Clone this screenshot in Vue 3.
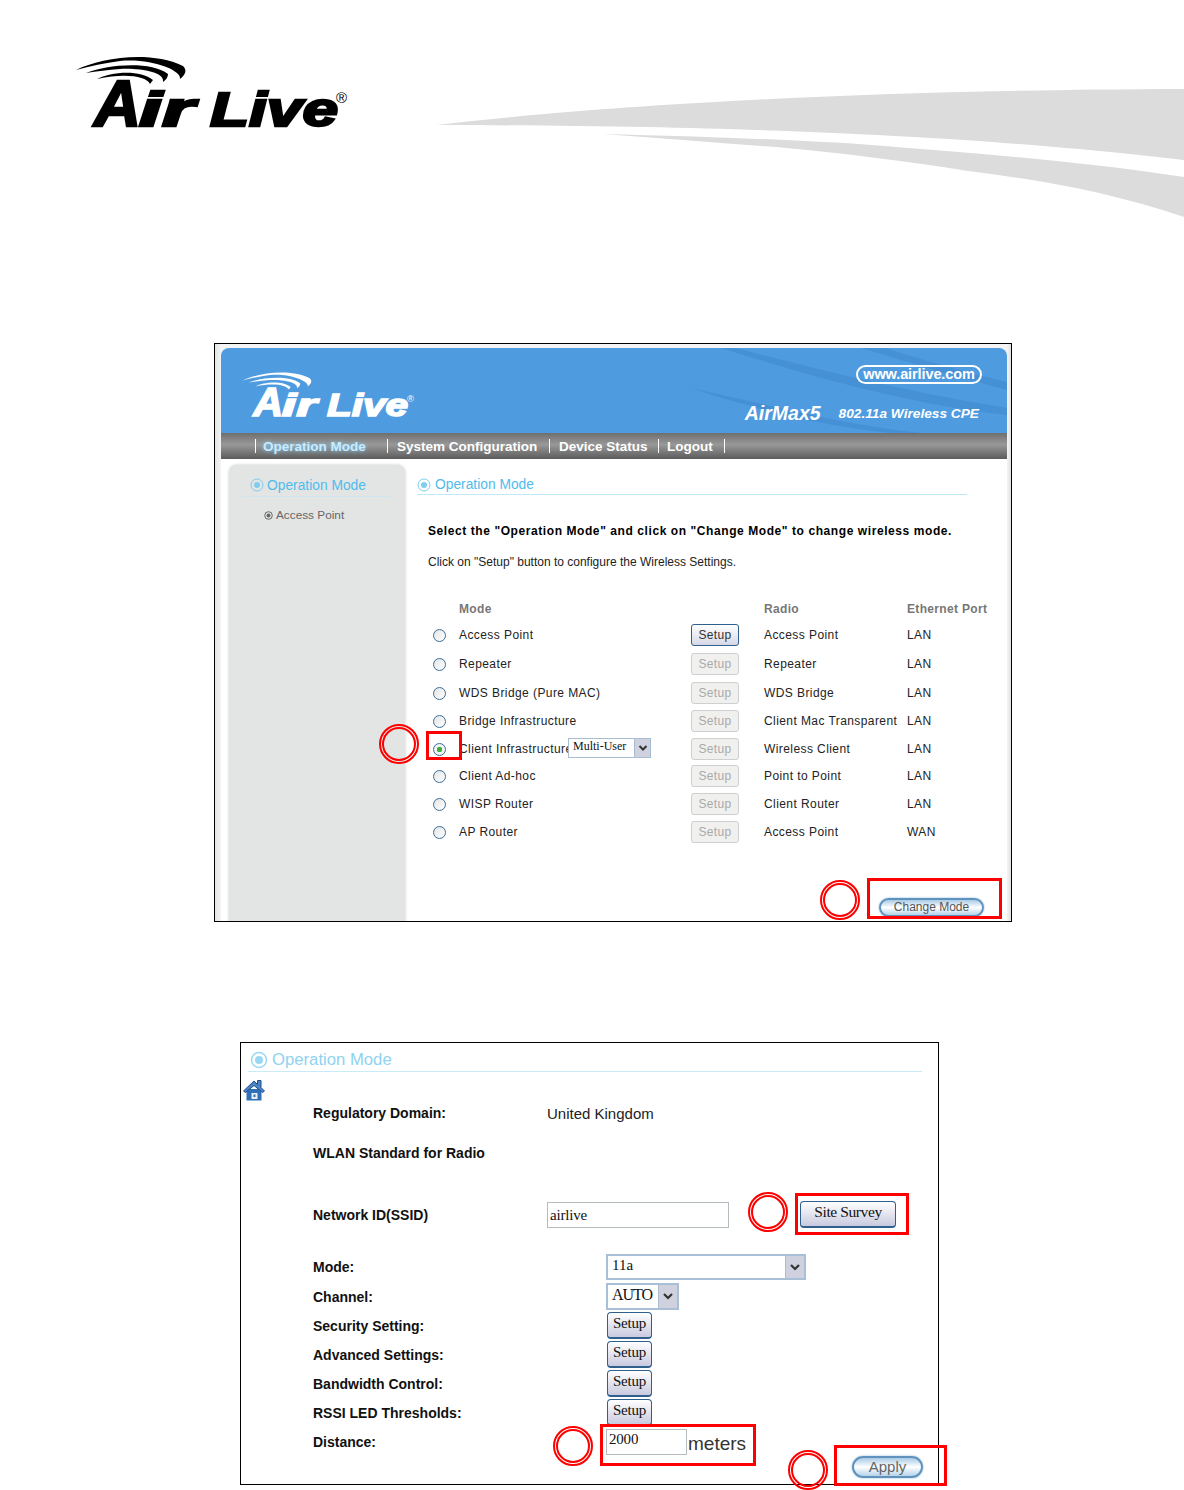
<script setup>
const modes = [
  { name: 'Access Point', radio: 'Access Point', port: 'LAN', step: 29, active: true },
  { name: 'Repeater', radio: 'Repeater', port: 'LAN', step: 29 },
  { name: 'WDS Bridge (Pure MAC)', radio: 'WDS Bridge', port: 'LAN', step: 28 },
  { name: 'Bridge Infrastructure', radio: 'Client Mac Transparent', port: 'LAN', step: 28 },
  { name: 'Client Infrastructure', radio: 'Wireless Client', port: 'LAN', step: 27, selected: true },
  { name: 'Client Ad-hoc', radio: 'Point to Point', port: 'LAN', step: 28 },
  { name: 'WISP Router', radio: 'Client Router', port: 'LAN', step: 28 },
  { name: 'AP Router', radio: 'Access Point', port: 'WAN', step: 28 }
]
const setups = ['Security Setting:', 'Advanced Settings:', 'Bandwidth Control:', 'RSSI LED Thresholds:']
const boxes = [
  { x: 426, y: 731, w: 36, h: 29 },
  { x: 867, y: 878, w: 135, h: 41 },
  { x: 795, y: 1193, w: 114, h: 42 },
  { x: 600, y: 1424, w: 156, h: 42 },
  { x: 834, y: 1445, w: 113, h: 41 }
]
const rings = [
  { x: 399, y: 744 },
  { x: 840, y: 900 },
  { x: 768, y: 1212 },
  { x: 573, y: 1446 },
  { x: 808, y: 1470 }
]
</script>

<template>
  <div class="page">
    <svg class="banner" width="1184" height="343" viewBox="0 0 1184 343">
      <defs>
        <symbol id="airlive-logo" viewBox="70 50 285 85">
          <path fill="currentColor" d="M76 70C100 58 150 50 183 66C187 70 186 74 180 79C182 70 150 58 120 61C105 63 90 66 76 70Z" />
          <path fill="currentColor" d="M86 73C105 65 150 60 168 74C168 77 166 80 163 82C165 72 140 68 120 69C108 70 97 71 86 73Z" />
          <path fill="currentColor" d="M97 79C110 72 140 69 153 80L150 84C146 76 125 73 97 79Z" />
          <g fill="currentColor" stroke="currentColor" stroke-width="2.400" font-family="'Liberation Sans', sans-serif" font-weight="700" font-style="italic">
            <text x="94" y="126" font-size="64" textLength="47" lengthAdjust="spacingAndGlyphs">A</text>
            <text x="139" y="126" font-size="48" textLength="55" lengthAdjust="spacingAndGlyphs">ir</text>
            <text x="210" y="126" font-size="48" textLength="128" lengthAdjust="spacingAndGlyphs">Live</text>
          </g>
          <text x="336" y="103" font-size="15" fill="currentColor" font-family="'Liberation Sans', sans-serif">®</text>
        </symbol>
      </defs>
      <use href="#airlive-logo" x="70" y="50" width="285" height="85" color="#000" />
      <path fill="#dcdcdc" d="M437 125C600 106 850 90 1184 89L1184 160C1000 139 800 126 437 125Z" />
      <path fill="#dcdcdc" d="M603 134C720 137 830 141 896 147C1000 155 1090 163 1184 177L1184 217C1110 192 1040 180 968 171C900 160 840 153 776 147C720 143 660 138 603 134Z" />
    </svg>

    <section class="shot shot-one">
      <header class="hero">
        <svg class="hero-waves" viewBox="0 0 786 85" width="786" height="85" aria-hidden="true">
          <path fill="#4690d6" d="M500 0C580 25 680 55 786 67L786 60C690 45 590 20 515 0Z" />
          <path fill="#4690d6" d="M470 40C560 60 630 78 700 85L670 85C600 78 530 60 470 40Z" />
          <path fill="#4690d6" d="M640 0C690 15 740 30 786 42L786 34C745 24 700 12 665 0Z" />
        </svg>
        <svg class="hero-logo" width="181" height="54" viewBox="0 0 181 54">
          <use href="#airlive-logo" x="0" y="0" width="181" height="54" color="#fff" />
        </svg>
        <div class="hero-side">
          <div class="site-pill">www.airlive.com</div>
          <div class="product">
            <span class="product-name">AirMax5</span>
            <span class="product-type">802.11a Wireless CPE</span>
          </div>
        </div>
      </header>

      <nav class="nav">
        <span class="nav-item nav-current">Operation Mode</span>
        <span class="nav-item nav-system">System Configuration</span>
        <span class="nav-item nav-device">Device Status</span>
        <span class="nav-item nav-logout">Logout</span>
      </nav>

      <div class="workspace">
        <aside class="side">
          <div class="side-title">
            <svg class="target" width="14" height="14" viewBox="0 0 14 14"><circle cx="7" cy="7" r="6" fill="none" stroke="#7fcdf0" /><circle cx="7" cy="7" r="3" fill="#7fcdf0" /></svg>
            <span>Operation Mode</span>
          </div>
          <div class="side-item">
            <svg width="9" height="9" viewBox="0 0 9 9"><circle cx="4.500" cy="4.500" r="3.800" fill="none" stroke="#666" /><circle cx="4.500" cy="4.500" r="2" fill="#666" /></svg>
            <span>Access Point</span>
          </div>
        </aside>

        <main class="content">
          <div class="content-title">
            <svg class="target" width="14" height="14" viewBox="0 0 14 14"><circle cx="7" cy="7" r="6" fill="none" stroke="#7fcdf0" /><circle cx="7" cy="7" r="3" fill="#7fcdf0" /></svg>
            <span>Operation Mode</span>
          </div>
          <p class="lead">Select the "Operation Mode" and click on "Change Mode" to change wireless mode.</p>
          <p class="hint">Click on "Setup" button to configure the Wireless Settings.</p>

          <div class="mode-table">
            <div class="mode-head">
              <span></span><span>Mode</span><span></span><span>Radio</span><span>Ethernet Port</span>
            </div>
            <div v-for="m in modes" :key="m.name" class="mode-row" :style="{ height: m.step + 'px' }">
              <span class="radio" :class="{ checked: m.selected }"></span>
              <span class="mode-name">
                {{ m.name }}
                <span v-if="m.selected" class="mini-select">
                  <span>Multi-User</span>
                  <span class="arrow-box"><svg width="10" height="8" viewBox="0 0 10 8"><path d="M1.500 2L5 5.500L8.500 2" fill="none" stroke="#333" stroke-width="2" /></svg></span>
                </span>
              </span>
              <span><button class="setup-btn" :class="{ enabled: m.active }">Setup</button></span>
              <span>{{ m.radio }}</span>
              <span>{{ m.port }}</span>
            </div>
          </div>

          <button class="pill-btn change-mode">Change Mode</button>
        </main>
      </div>
    </section>

    <section class="shot shot-two">
      <div class="form-title">
        <svg width="18" height="18" viewBox="0 0 18 18"><circle cx="9" cy="9" r="7.500" fill="none" stroke="#9ad8f2" stroke-width="1.500" /><circle cx="9" cy="9" r="4" fill="#9ad8f2" /></svg>
        <span>Operation Mode</span>
      </div>
      <svg class="home" width="22" height="22" viewBox="0 0 22 22">
        <path fill="#2f6fb8" d="M3.500 10H18.500V21.500H3.500Z" />
        <rect x="8.500" y="14" width="6" height="6" fill="#e8eef6" />
        <rect x="10.500" y="15.500" width="2" height="2.500" fill="#2f6fb8" />
        <path fill="#4a84c4" stroke="#1e4f8a" d="M0.500 12L11 2L14.500 5.500V1.500H18V8.500L21.500 12L19.500 13.500L11 6.500L2.500 13.500Z" />
      </svg>

      <div class="form">
        <div class="row-top"><span class="label">Regulatory Domain:</span><span class="value">United Kingdom</span></div>
        <div class="row-top row-wlan"><span class="label">WLAN Standard for Radio</span></div>
        <div class="row-top row-ssid">
          <span class="label">Network ID(SSID)</span>
          <span class="ssid-controls">
            <span class="field ssid">airlive</span>
            <button class="soft-btn survey">Site Survey</button>
          </span>
        </div>

        <div class="row-low row-mode">
          <span class="label">Mode:</span>
          <span class="select select-wide"><span>11a</span><span class="arrow-box big"><svg width="12" height="9" viewBox="0 0 12 9"><path d="M2 2L6 6L10 2" fill="none" stroke="#333" stroke-width="2.200" /></svg></span></span>
        </div>
        <div class="row-low">
          <span class="label">Channel:</span>
          <span class="select select-auto"><span>AUTO</span><span class="arrow-box big"><svg width="12" height="9" viewBox="0 0 12 9"><path d="M2 2L6 6L10 2" fill="none" stroke="#333" stroke-width="2.200" /></svg></span></span>
        </div>
        <div v-for="s in setups" :key="s" class="row-low">
          <span class="label">{{ s }}</span>
          <button class="soft-btn small">Setup</button>
        </div>
        <div class="row-low">
          <span class="label">Distance:</span>
          <span class="distance"><span class="field dist">2000</span><span class="unit">meters</span></span>
        </div>
      </div>

      <button class="pill-btn apply">Apply</button>
    </section>

    <div v-for="b in boxes" :key="b.x" class="mark-box" :style="{ left: b.x + 'px', top: b.y + 'px', width: b.w + 'px', height: b.h + 'px' }"></div>
    <div v-for="r in rings" :key="r.x" class="mark-ring" :style="{ left: r.x - 20 + 'px', top: r.y - 20 + 'px' }"></div>
  </div>
</template>

<style>
html, body { margin: 0; background: #fff; }
</style>

<style scoped>
.page {
  position: relative;
  width: 1184px;
  height: 1490px;
  overflow: hidden;
  background: #fff;
  font-family: "Liberation Sans", Arial, sans-serif;
  color: #111;
}
.banner { display: block; }

.shot { box-sizing: border-box; border: 1px solid #000; overflow: hidden; background: #fff; }
.shot-one {
  width: 798px;
  height: 579px;
  margin-left: 214px;
  padding: 4px 4px 0 6px;
  background: linear-gradient(90deg, #e4e4e4 0, #f4f4f4 6px, #f4f4f4 792px, #d8d8d8 798px);
}
.hero {
  position: relative;
  height: 85px;
  background: #4f9bdf;
  border-radius: 8px 8px 0 0;
  display: flex;
  justify-content: space-between;
  overflow: hidden;
}
.hero-waves { position: absolute; left: 0; top: 0; }
.hero-logo { position: relative; margin: 20px 0 0 17px; }
.hero-side {
  position: relative;
  display: flex;
  flex-direction: column;
  align-items: flex-end;
  padding: 17px 25px 0 0;
  color: #fff;
}
.site-pill {
  box-sizing: border-box;
  width: 126px;
  height: 19px;
  border: 2px solid #fff;
  border-radius: 9.500px;
  text-align: center;
  font-size: 14.500px;
  font-weight: 700;
  line-height: 15px;
  letter-spacing: -0.1px;
}
.product { display: flex; align-items: center; gap: 18px; margin: 18px 3px 0 0; font-style: italic; font-weight: 700; }
.product-name { font-size: 19.500px; }
.product-type { font-size: 13.700px; }

.nav {
  height: 26px;
  display: flex;
  align-items: center;
  background: linear-gradient(#6f6f6f, #989898 45%, #5b5b5b);
  color: #fff;
  font-size: 13.500px;
  font-weight: 700;
}
.nav-item { box-sizing: border-box; height: 14px; line-height: 16px; border-left: 1px solid #fff; white-space: nowrap; }
.nav-current { margin-left: 34px; width: 132px; padding-left: 7px; color: #c8ebff; text-shadow: 0 0 4px #7fd0ff; }
.nav-system { width: 162px; padding-left: 9px; }
.nav-device { width: 109px; padding-left: 9px; }
.nav-logout { width: 67px; padding-left: 8px; border-right: 1px solid #fff; }

.workspace { display: flex; background: #fff; height: 462px; }
.side {
  box-sizing: border-box;
  width: 176px;
  height: 462px;
  margin: 6px 0 0 8px;
  padding: 11px 15px 0 13px;
  background: #e3e5e4;
  border-radius: 8px 8px 0 0;
  box-shadow: 0 0 3px #c4c4c4;
}
.side-title {
  display: flex;
  align-items: center;
  gap: 3px;
  height: 18px;
  padding: 0 0 2px 8px;
  border-bottom: 1px solid #cfe4ee;
  color: #4fbcec;
  font-size: 13.800px;
}
.side-item { display: flex; align-items: center; gap: 3px; margin: 10px 0 0 22px; height: 16px; font-size: 11.800px; color: #666; }

.content { flex: 1; padding-top: 18px; min-width: 0; margin-left: 12px; }
.content-title {
  display: flex;
  align-items: center;
  gap: 4px;
  width: 550px;
  height: 15px;
  padding-bottom: 2px;
  border-bottom: 1px solid #bfe8f8;
  color: #4fbcec;
  font-size: 13.800px;
}
.lead { margin: 26px 0 0 11px; height: 20px; line-height: 20px; font-size: 12px; font-weight: 700; color: #000; letter-spacing: 0.58px; white-space: nowrap; }
.hint { margin: 11px 0 0 11px; height: 20px; line-height: 20px; font-size: 12px; color: #222; white-space: nowrap; }

.mode-table { margin: 27px 0 0 16px; font-size: 12px; letter-spacing: 0.42px; color: #222; }
.mode-head, .mode-row { display: grid; grid-template-columns: 26px 232px 73px 143px 100px; white-space: nowrap; }
.mode-head { height: 25px; align-items: start; line-height: 20px; font-weight: 700; color: #777; letter-spacing: 0.33px; }
.mode-row > span { display: flex; align-items: center; height: 22px; }
.radio {
  box-sizing: border-box;
  width: 13px;
  margin-top: 5px;
  height: 13px !important;
  border: 1.500px solid #3d6e96;
  border-radius: 50%;
  background: linear-gradient(135deg, #e4e4e4, #fff);
}
.radio.checked { background: radial-gradient(circle, #3fae3f 0 2.500px, #f2f2f2 3px); }
.mode-name { position: relative; }
.mini-select {
  position: absolute;
  left: 109px;
  top: 0;
  box-sizing: border-box;
  width: 83px;
  height: 20px;
  padding-left: 4px;
  display: flex;
  align-items: center;
  justify-content: space-between;
  border: 1px solid #a9bdd2;
  background: #fff;
  font-family: "Liberation Serif", serif;
  font-size: 12px;
  letter-spacing: 0;
  color: #111;
}
.mini-select > span:first-child { margin-top: -3px; }
.arrow-box {
  display: flex;
  align-items: center;
  justify-content: center;
  width: 15px;
  height: 18px;
  background: #cfd1de;
  border-left: 1px solid #a9bdd2;
}
.setup-btn {
  box-sizing: border-box;
  width: 48px;
  height: 22px;
  padding: 0;
  border: 1px solid #cfcfcf;
  border-radius: 3px;
  background: #f0f0ee;
  font-family: inherit;
  font-size: 12px;
  letter-spacing: 0.3px;
  color: #aaa;
}
.setup-btn.enabled { border-color: #2f5f8c; color: #333; background: linear-gradient(#fff, #d6d8e6); }
.pill-btn {
  display: block;
  box-sizing: border-box;
  padding: 0 0 1px;
  border: 2px solid #5f93bd;
  border-radius: 11px;
  background: linear-gradient(#a9cbe6, #fff 50%, #b5d3ea);
  box-shadow: 0 0 2px #7fb0d6;
  font-family: inherit;
  color: #555;
}
.change-mode { width: 105px; height: 19px; margin: 49px 0 0 462px; font-size: 12px; }

.shot-two { width: 699px; height: 443px; margin: 120px 0 0 240px; }
.form-title {
  display: flex;
  align-items: center;
  gap: 4px;
  box-sizing: border-box;
  width: 674px;
  height: 29px;
  margin-left: 7px;
  padding: 5px 0 0 2px;
  border-bottom: 1px solid #c9ebf8;
  color: #8fd3ef;
  font-size: 16.700px;
}
.home { display: block; margin: 7px 0 0 2px; }
.form { margin-left: 72px; font-size: 14px; }
.label { font-weight: 700; color: #111; white-space: nowrap; }
.row-top { display: grid; grid-template-columns: 234px auto; align-items: center; height: 24px; }
.row-wlan { margin-top: 16px; }
.row-ssid { margin-top: 13px; height: 74px; }
.value { font-size: 15px; color: #222; }
.ssid-controls { display: flex; align-items: center; gap: 71px; }
.field {
  box-sizing: border-box;
  display: flex;
  align-items: center;
  border: 1px solid #b5bcc0;
  background: #fff;
  font-family: "Liberation Serif", serif;
  color: #111;
}
.ssid { width: 182px; height: 26px; padding-left: 2px; font-size: 15px; letter-spacing: -0.2px; }
.soft-btn {
  box-sizing: border-box;
  padding: 0 0 3px;
  border: 1px solid #2f5f8c;
  border-bottom-width: 2px;
  border-radius: 4px;
  background: linear-gradient(#fff, #c9cadf);
  font-family: "Liberation Serif", serif;
  font-size: 16px;
  color: #111;
}
.survey { width: 96px; height: 27px; margin-top: -2px; font-size: 15.500px; letter-spacing: -0.4px; }
.small { width: 45px; height: 27px; margin-left: 1px; font-size: 15px; letter-spacing: -0.2px; }
.row-low { display: grid; grid-template-columns: 293px auto; align-items: center; height: 29px; }
.row-mode { height: 30px; }
.select {
  box-sizing: border-box;
  display: flex;
  align-items: center;
  justify-content: space-between;
  padding-left: 4px;
  border: 2px solid #a9bfd6;
  background: #fff;
  font-family: "Liberation Serif", serif;
  color: #111;
}
.select > span:first-child { margin-top: -3px; }
.arrow-box.big { width: 18px; height: 100%; border-left: 1px solid #a9bdd2; }
.select-wide { width: 200px; height: 26px; font-size: 15px; }
.select-auto { width: 73px; height: 27px; font-size: 16px; letter-spacing: -1px; }
.distance { display: flex; align-items: center; }
.dist { width: 81px; height: 26px; padding-left: 2px; font-size: 15px; letter-spacing: -0.2px; align-items: flex-start; padding-top: 1px; }
.unit { margin: 5px 0 0 1px; font-size: 19px; color: #333; }
.apply { width: 71px; height: 22px; margin: 0 0 0 611px; font-size: 15px; color: #666; }

.mark-box { position: absolute; box-sizing: border-box; border: 3px solid #f00; }
.mark-ring {
  position: absolute;
  box-sizing: border-box;
  width: 40px;
  height: 40px;
  border: 2px solid #f00;
  border-radius: 50%;
}
.mark-ring::after {
  content: "";
  position: absolute;
  inset: 1px;
  border: 2px solid #f00;
  border-radius: 50%;
}
</style>
